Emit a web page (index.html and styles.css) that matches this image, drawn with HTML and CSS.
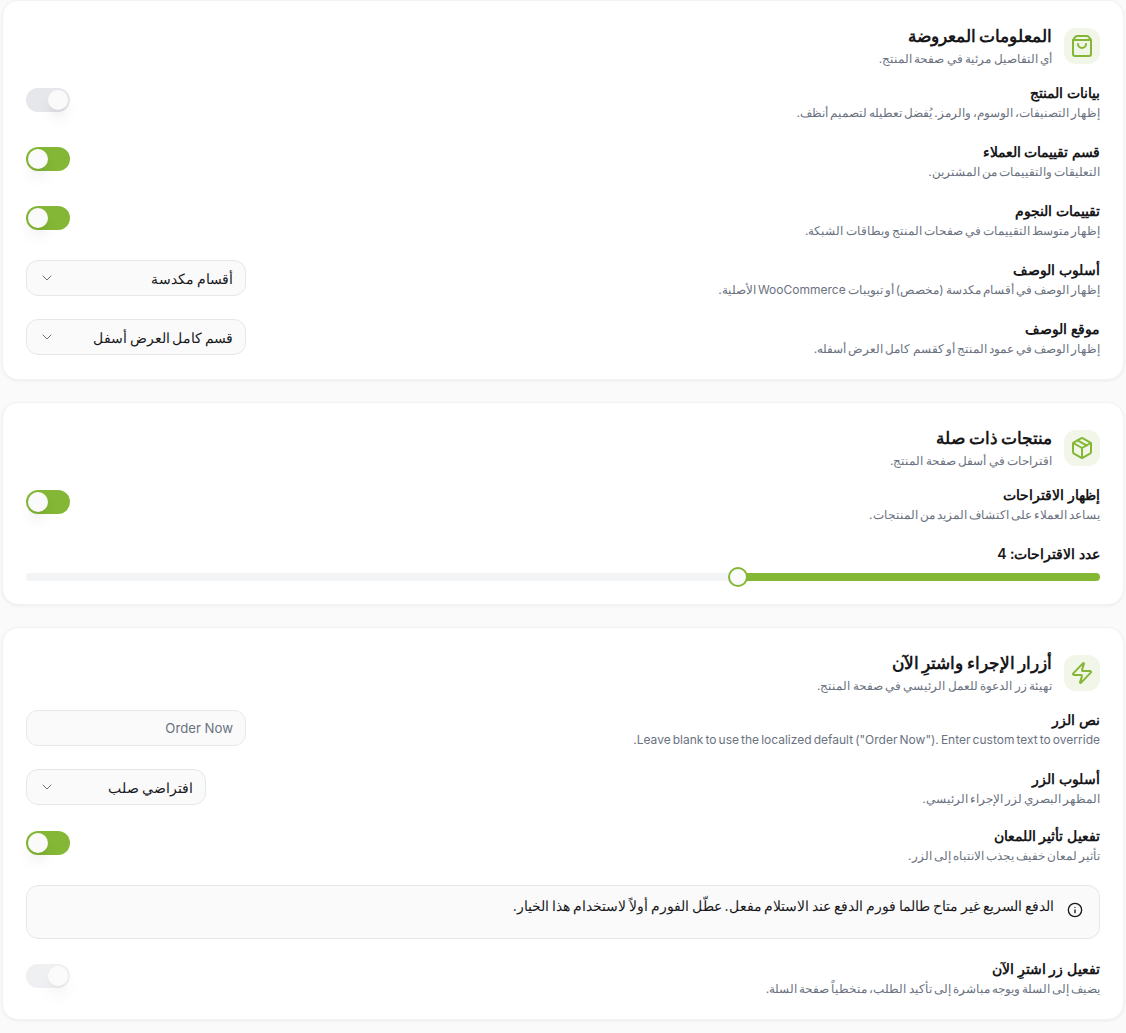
FILE: index.html
```html
<!DOCTYPE html>
<html lang="ar" dir="rtl">
<head>
    <meta charset="UTF-8">
    <meta name="viewport" content="width=device-width, initial-scale=1.0">
    <title>إعدادات صفحة المنتج</title>
    <link rel="stylesheet" href="styles.css">
</head>
<body>
    <section class="card">
        <div class="card-head">
            <div class="card-icon">
                <svg viewBox="0 0 24 24"><path d="M16 10a4 4 0 0 1-8 0"/><path d="M3.103 6.034h17.794"/><path d="M3.4 5.467a2 2 0 0 0-.4 1.2V20a2 2 0 0 0 2 2h14a2 2 0 0 0 2-2V6.667a2 2 0 0 0-.4-1.2l-2-2.667A2 2 0 0 0 17 2H7a2 2 0 0 0-1.6.8z"/></svg>
            </div>
            <div>
                <h2>المعلومات المعروضة</h2>
                <p>أي التفاصيل مرئية في صفحة المنتج.</p>
            </div>
        </div>
        <div class="row">
            <div class="row-text">
                <h3>بيانات المنتج</h3>
                <p>إظهار التصنيفات، الوسوم، والرمز. يُفضل تعطيله لتصميم أنظف.</p>
            </div>
            <div class="toggle off"><span class="knob"></span></div>
        </div>
        <div class="row">
            <div class="row-text">
                <h3>قسم تقييمات العملاء</h3>
                <p>التعليقات والتقييمات من المشترين.</p>
            </div>
            <div class="toggle"><span class="knob"></span></div>
        </div>
        <div class="row">
            <div class="row-text">
                <h3>تقييمات النجوم</h3>
                <p>إظهار متوسط التقييمات في صفحات المنتج وبطاقات الشبكة.</p>
            </div>
            <div class="toggle"><span class="knob"></span></div>
        </div>
        <div class="row">
            <div class="row-text">
                <h3>أسلوب الوصف</h3>
                <p>إظهار الوصف في أقسام مكدسة (مخصص) أو تبويبات WooCommerce الأصلية.</p>
            </div>
            <div class="select">
                <span>أقسام مكدسة</span>
                <svg viewBox="0 0 24 24"><path d="m6 9 6 6 6-6"/></svg>
            </div>
        </div>
        <div class="row">
            <div class="row-text">
                <h3>موقع الوصف</h3>
                <p>إظهار الوصف في عمود المنتج أو كقسم كامل العرض أسفله.</p>
            </div>
            <div class="select">
                <span>قسم كامل العرض أسفل</span>
                <svg viewBox="0 0 24 24"><path d="m6 9 6 6 6-6"/></svg>
            </div>
        </div>
    </section>

    <section class="card">
        <div class="card-head">
            <div class="card-icon">
                <svg viewBox="0 0 24 24"><path d="M11 21.73a2 2 0 0 0 2 0l7-4A2 2 0 0 0 21 16V8a2 2 0 0 0-1-1.73l-7-4a2 2 0 0 0-2 0l-7 4A2 2 0 0 0 3 8v8a2 2 0 0 0 1 1.73z"/><path d="M12 22V12"/><path d="m3.3 7 8.7 5 8.7-5"/><path d="m7.5 4.27 9 5.15"/></svg>
            </div>
            <div>
                <h2>منتجات ذات صلة</h2>
                <p>اقتراحات في أسفل صفحة المنتج.</p>
            </div>
        </div>
        <div class="row">
            <div class="row-text">
                <h3>إظهار الاقتراحات</h3>
                <p>يساعد العملاء على اكتشاف المزيد من المنتجات.</p>
            </div>
            <div class="toggle"><span class="knob"></span></div>
        </div>
        <div class="slider">
            <h3>عدد الاقتراحات: 4</h3>
            <div class="track">
                <div class="fill" style="width: 33.7%"><span class="thumb"></span></div>
            </div>
        </div>
    </section>

    <section class="card">
        <div class="card-head">
            <div class="card-icon">
                <svg viewBox="0 0 24 24"><path d="M4 14a1 1 0 0 1-.78-1.63l9.9-10.2a.5.5 0 0 1 .86.46l-1.92 6.02A1 1 0 0 0 13 10h7a1 1 0 0 1 .78 1.63l-9.9 10.2a.5.5 0 0 1-.86-.46l1.92-6.02A1 1 0 0 0 11 14z"/></svg>
            </div>
            <div>
                <h2>أزرار الإجراء واشترِ الآن</h2>
                <p>تهيئة زر الدعوة للعمل الرئيسي في صفحة المنتج.</p>
            </div>
        </div>
        <div class="row">
            <div class="row-text">
                <h3>نص الزر</h3>
                <p>Leave blank to use the localized default ("Order Now"). Enter custom text to override.</p>
            </div>
            <div class="select input">Order Now</div>
        </div>
        <div class="row tight">
            <div class="row-text">
                <h3>أسلوب الزر</h3>
                <p>المظهر البصري لزر الإجراء الرئيسي.</p>
            </div>
            <div class="select narrow">
                <span>افتراضي صلب</span>
                <svg viewBox="0 0 24 24"><path d="m6 9 6 6 6-6"/></svg>
            </div>
        </div>
        <div class="row">
            <div class="row-text">
                <h3>تفعيل تأثير اللمعان</h3>
                <p>تأثير لمعان خفيف يجذب الانتباه إلى الزر.</p>
            </div>
            <div class="toggle"><span class="knob"></span></div>
        </div>
        <div class="notice">
            <svg viewBox="0 0 24 24"><circle cx="12" cy="12" r="10"/><path d="M12 16v-4"/><path d="M12 8h.01"/></svg>
            <span>الدفع السريع غير متاح طالما فورم الدفع عند الاستلام مفعل. عطّل الفورم أولاً لاستخدام هذا الخيار.</span>
        </div>
        <div class="row">
            <div class="row-text">
                <h3>تفعيل زر اشترِ الآن</h3>
                <p>يضيف إلى السلة ويوجه مباشرة إلى تأكيد الطلب، متخطياً صفحة السلة.</p>
            </div>
            <div class="toggle off faded"><span class="knob"></span></div>
        </div>
    </section>
</body>
</html>
```

FILE: styles.css
```css
body {
    font-family: Inter, "Noto Sans", sans-serif;
    background-color: #fafafa;
    color: #18181b;
    margin: 0;
    padding: 0 2px 13px;
}
h2, h3, p {
    margin: 0;
}
svg {
    fill: none;
    stroke: currentColor;
    stroke-width: 2;
    stroke-linecap: round;
    stroke-linejoin: round;
}
.card {
    background: white;
    border: 1px solid #f2f2f3;
    border-radius: 16px;
    box-shadow: 0 1px 3px rgba(0, 0, 0, 0.06);
    padding: 23px;
    margin-bottom: 22px;
}
.card:last-child {
    margin-bottom: 0;
}
.card-head {
    display: flex;
    align-items: center;
    gap: 12px;
    margin-bottom: 16px;
}
.card-head h2 {
    font-size: 16.5px;
    line-height: 24px;
    font-weight: 700;
    word-spacing: -0.5px;
}
.card-head p {
    font-size: 12px;
    line-height: 16px;
    color: #6b7280;
    margin-top: 3px;
    word-spacing: -1px;
}
.card-icon {
    width: 36px;
    height: 36px;
    border-radius: 12px;
    background-color: #f2f6e9;
    color: #84b735;
    display: flex;
    align-items: center;
    justify-content: center;
}
.card-icon svg {
    width: 24px;
    height: 24px;
}
.row {
    display: flex;
    align-items: center;
    justify-content: space-between;
    margin-bottom: 21px;
}
.row.tight {
    margin-bottom: 19px;
}
.row:last-child {
    margin-bottom: -1px;
}
.row h3, .slider h3 {
    font-size: 14px;
    line-height: 20px;
    font-weight: 600;
}
.row p {
    font-size: 12px;
    line-height: 16px;
    color: #6b7280;
    margin-top: 2px;
    word-spacing: -1.3px;
}
.toggle {
    width: 44px;
    height: 24px;
    border-radius: 12px;
    background-color: #84b735;
    display: flex;
    align-items: center;
    justify-content: flex-end;
    padding: 0 2px;
    box-sizing: border-box;
    margin-bottom: 4px;
}
.toggle.off {
    background-color: #e5e7eb;
    justify-content: flex-start;
}
.toggle.faded {
    opacity: 0.6;
}
.knob {
    width: 20px;
    height: 20px;
    border-radius: 50%;
    background-color: #fafafa;
    box-shadow: 0 10px 15px -3px rgba(0, 0, 0, 0.1), 0 4px 6px -4px rgba(0, 0, 0, 0.1);
}
.select {
    width: 220px;
    height: 36px;
    box-sizing: border-box;
    background-color: #fafafa;
    border: 1px solid #e5e7eb;
    border-radius: 12px;
    padding: 0 12px;
    font-size: 14px;
    word-spacing: -1.3px;
    display: flex;
    align-items: center;
    justify-content: space-between;
    margin-bottom: 2px;
}
.select svg {
    width: 16px;
    height: 16px;
    color: #71717a;
    stroke-width: 1.5;
}
.select.narrow {
    width: 180px;
}
.select.input {
    color: #6b7280;
    font-size: 13.2px;
    word-spacing: 0;
}
.slider h3 {
    margin-top: 17px;
}
.track {
    height: 8px;
    border-radius: 4px;
    background-color: #f3f4f6;
    margin-top: 9px;
}
.fill {
    height: 8px;
    border-radius: 4px;
    background-color: #84b735;
    position: relative;
}
.thumb {
    position: absolute;
    left: -10px;
    top: -6px;
    width: 20px;
    height: 20px;
    box-sizing: border-box;
    border: 2px solid #84b735;
    border-radius: 50%;
    background-color: #fafafa;
}
.notice {
    display: flex;
    align-items: flex-start;
    gap: 13px;
    background-color: #fafafa;
    border: 1px solid #e5e7eb;
    border-radius: 12px;
    padding: 10px 16px;
    height: 54px;
    box-sizing: border-box;
    font-size: 14px;
    line-height: 20px;
    word-spacing: -1px;
    margin-bottom: 20px;
}
.notice svg {
    width: 16px;
    height: 16px;
    flex-shrink: 0;
    margin-top: 6px;
}
```
